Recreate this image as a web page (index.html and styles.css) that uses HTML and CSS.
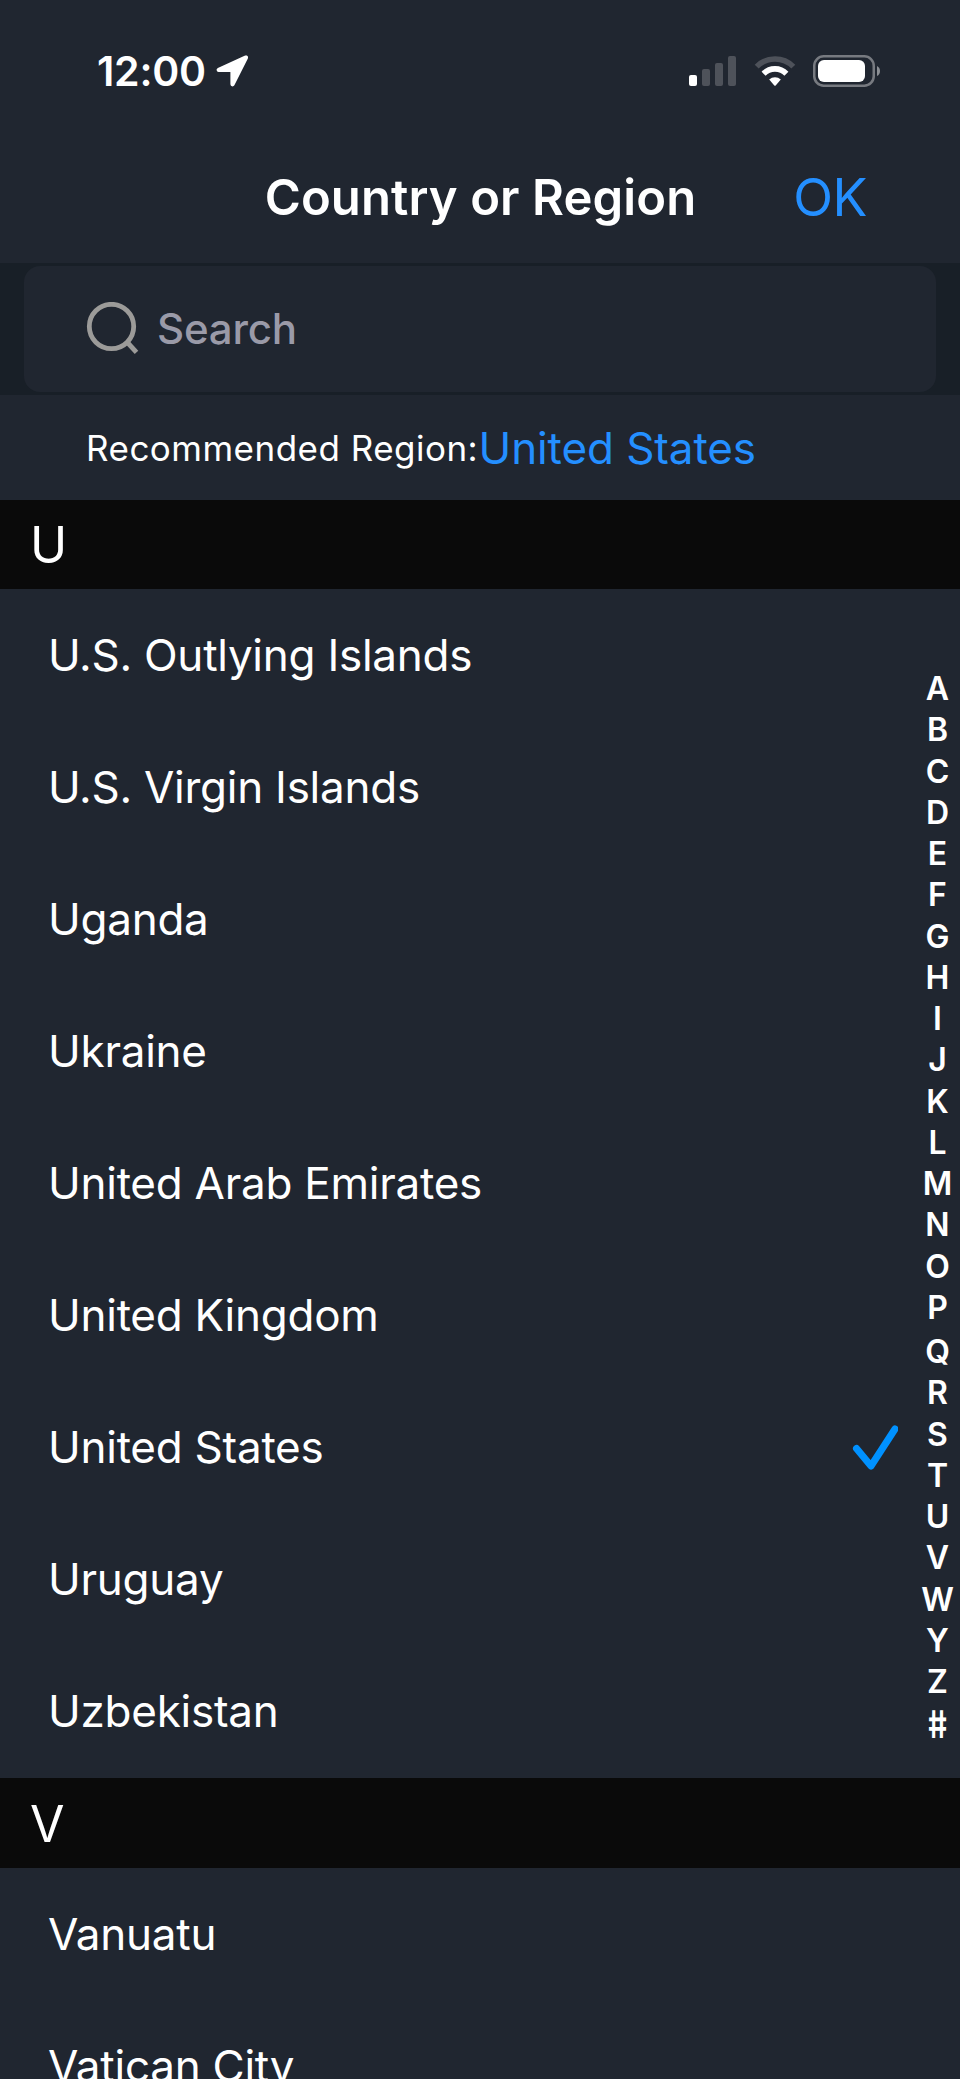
FILE: index.html
```html
<!DOCTYPE html>
<html lang="en">
<head>
<meta charset="utf-8">
<title>Country or Region</title>
<link rel="stylesheet" href="styles.css">
</head>
<body>
<div class="screen">
  <div class="status-bar">
    <span class="clock">12:00</span>
    <svg class="location" width="34" height="34" viewBox="0 0 34 34"><path d="M31 3.500L3.700 15.800H17.500V30.300Z" fill="#fff" stroke="#fff" stroke-width="4.200" stroke-linejoin="round"/></svg>
    <div class="status-icons">
      <svg width="47" height="32" viewBox="0 0 47 32">
        <rect x="0" y="20" width="8" height="11" rx="2" fill="#fff"/>
        <g fill="#4e525a"><rect x="13" y="14" width="8" height="17" rx="2"/><rect x="26" y="8" width="8" height="23" rx="2"/><rect x="39" y="1" width="8" height="30" rx="2"/></g>
      </svg>
      <svg width="42" height="32" viewBox="0 0 42 32" fill="none">
        <path d="M2.700 11.600A25.800 25.800 0 0 1 39.300 11.600" stroke="#4e525a" stroke-width="5.600"/>
        <path d="M9.600 18.700A15.800 15.800 0 0 1 32.400 18.700" stroke="#fff" stroke-width="5.600"/>
        <path d="M15.200 24.600A8.500 8.500 0 0 1 26.800 24.600L21.700 30.500Q21 31.200 20.300 30.500Z" fill="#fff"/>
      </svg>
      <svg width="67" height="32" viewBox="0 0 67 32">
        <rect x="1.250" y="1.250" width="59.500" height="29.500" rx="9.500" fill="none" stroke="#777a80" stroke-width="2.500"/>
        <rect x="5" y="5" width="47" height="22" rx="6" fill="#fff"/>
        <path d="M64 11Q67 12.500 67 16T64 21Z" fill="#8c8f94"/>
      </svg>
    </div>
  </div>
  <header class="nav">
    <h1 class="nav-title">Country or Region</h1>
    <span class="nav-ok">OK</span>
  </header>
  <div class="search-wrap">
    <div class="search">
      <svg class="search-icon" width="54" height="54" viewBox="0 0 54 54" fill="none" stroke="#9c9b99" stroke-width="4.800"><circle cx="25.500" cy="24.500" r="22.200"/><path d="M41 40L50.500 50.300"/></svg>
      <span class="placeholder">Search</span>
    </div>
  </div>
  <div class="recommended"><span class="rec-label">Recommended Region:</span><span class="rec-value">United States</span></div>
  <main class="regions">
    <h2 class="letter">U</h2>
    <ul class="list">
      <li class="row">U.S. Outlying Islands</li>
      <li class="row">U.S. Virgin Islands</li>
      <li class="row">Uganda</li>
      <li class="row">Ukraine</li>
      <li class="row">United Arab Emirates</li>
      <li class="row">United Kingdom</li>
      <li class="row">United States
        <svg class="check" width="46" height="46" viewBox="0 0 46 46" fill="none" stroke="#0091ff" stroke-width="7" stroke-linecap="round" stroke-linejoin="round"><path d="M4.500 24.500L19 42L43 5"/></svg>
      </li>
      <li class="row">Uruguay</li>
      <li class="row">Uzbekistan</li>
    </ul>
    <h2 class="letter letter-v">V</h2>
    <ul class="list">
      <li class="row">Vanuatu</li>
      <li class="row">Vatican City</li>
    </ul>
    <nav class="index">
      <span>A</span><span>B</span><span>C</span><span>D</span><span>E</span><span>F</span><span>G</span><span>H</span><span>I</span><span>J</span><span>K</span><span>L</span><span>M</span><span>N</span><span>O</span><span>P</span><span class="tall">Q</span><span>R</span><span>S</span><span>T</span><span>U</span><span>V</span><span>W</span><span>Y</span><span>Z</span><span class="hash">#</span>
    </nav>
  </main>
</div>
</body>
</html>
```
FILE: styles.css
```css
* { box-sizing: border-box; }
body {
  margin: 0;
  background: #202630;
  color: #fff;
  font-family: Inter, "Liberation Sans", sans-serif;
}
h1, h2, ul { margin: 0; padding: 0; font-weight: 400; list-style: none; }
svg { display: block; flex: none; }
.screen {
  width: 960px;
  height: 2079px;
  overflow: hidden;
  display: flex;
  flex-direction: column;
}
.status-bar {
  height: 131px;
  flex: none;
  display: flex;
  align-items: center;
  padding: 11px 80px 0 97px;
}
.clock { font-size: 41px; font-weight: 600; letter-spacing: -0.25px; line-height: 50px; width: 118px; }
.status-icons { margin-left: auto; display: flex; gap: 17.5px; }
.nav {
  height: 132px;
  flex: none;
  display: grid;
  grid-template-columns: 1fr auto 1fr;
  align-items: center;
  padding: 1px 93px 0 94px;
}
.nav-title { grid-column: 2; font-size: 49px; font-weight: 600; letter-spacing: 0.1px; line-height: 60px; }
.nav-ok { justify-self: end; font-size: 52px; letter-spacing: -0.5px; line-height: 60px; color: #248fff; }
.search-wrap { height: 132px; flex: none; background: #181f27; padding: 3px 24px; }
.search {
  height: 126px;
  border-radius: 16px;
  background: #202630;
  display: flex;
  align-items: center;
  padding-left: 62px;
  gap: 17px;
}
.placeholder { font-size: 42px; font-weight: 550; letter-spacing: -0.2px; line-height: 52px; color: #9a9aa8; }
.recommended {
  height: 105px;
  flex: none;
  display: flex;
  align-items: center;
  padding-left: 86px;
}
.rec-label { font-size: 35px; letter-spacing: 0.48px; line-height: 50px; width: 392.5px; white-space: nowrap; }
.rec-value { font-size: 44px; letter-spacing: -0.1px; line-height: 54px; color: #248fff; }
.regions { position: relative; flex: none; }
.letter {
  height: 89px;
  background: #0a0a0a;
  padding-left: 30px;
  font-size: 50px;
  line-height: 91px;
}
.letter-v { height: 90px; line-height: 92px; margin-top: 1px; }
.row {
  height: 132px;
  display: flex;
  align-items: center;
  justify-content: space-between;
  padding: 0 62px 0 48px;
  font-size: 44px;
  letter-spacing: -0.25px;
}
.index {
  position: absolute;
  top: 168px;
  right: 0;
  width: 45px;
  display: flex;
  flex-direction: column;
  text-align: center;
  font-size: 32px;
  font-weight: 570;
  line-height: 41.25px;
}
.tall { padding-top: 3px; }
.hash { font-size: 38px; line-height: 44px; transform: scaleX(0.8) skewX(9deg); }
```
